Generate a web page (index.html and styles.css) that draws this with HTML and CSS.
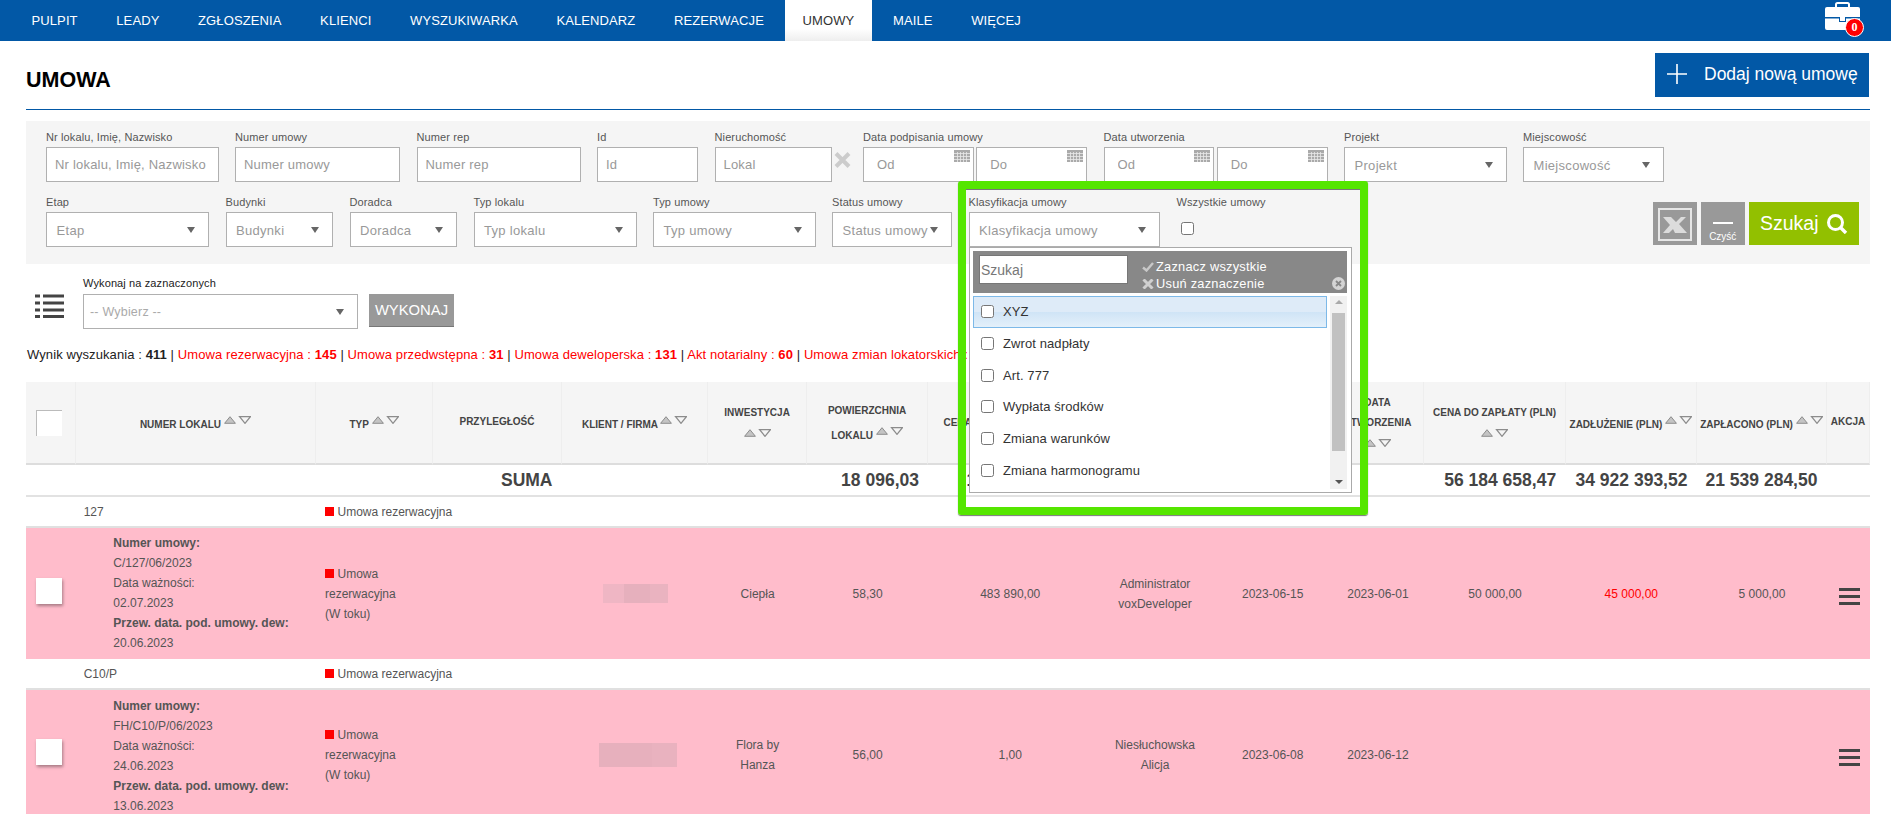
FILE: index.html
```html
<!DOCTYPE html>
<html lang="pl">
<head>
<meta charset="utf-8">
<title>Umowa</title>
<link rel="stylesheet" href="styles.css">
</head>
<body>
<svg class="defs" aria-hidden="true">
  <symbol id="sort" viewBox="0 0 27 8">
    <polygon points="6,.7 11.4,7.3 .6,7.3" fill="#c4c4c4" stroke="#8c8c8c"/>
    <polygon points="15.6,.7 26.4,.7 21,7.3" fill="#f5f5f5" stroke="#8c8c8c" stroke-width="1.3"/>
  </symbol>
  <symbol id="cal" viewBox="0 0 16 12">
    <rect width="16" height="12" fill="#aaa"/>
    <path d="M0 3.5h16M0 6.5h16M0 9.5h16M3.5 2v10M6.5 2v10M9.5 2v10M12.5 2v10" stroke="#e8e8e8" stroke-width=".8"/>
  </symbol>
</svg>

<nav class="topbar">
  <a class="nav-item">PULPIT</a>
  <a class="nav-item">LEADY</a>
  <a class="nav-item">ZGŁOSZENIA</a>
  <a class="nav-item">KLIENCI</a>
  <a class="nav-item">WYSZUKIWARKA</a>
  <a class="nav-item">KALENDARZ</a>
  <a class="nav-item">REZERWACJE</a>
  <a class="nav-item nav-active">UMOWY</a>
  <a class="nav-item">MAILE</a>
  <a class="nav-item">WIĘCEJ</a>
  <div class="tasks">
    <svg class="brief" viewBox="0 0 35 28" width="35" height="28">
      <path d="M11 5V2.5A1.5 1.5 0 0 1 12.5 1h10A1.5 1.5 0 0 1 24 2.5V5" fill="none" stroke="#fff" stroke-width="2"/>
      <path d="M2 5h31a2 2 0 0 1 2 2v8H0V7a2 2 0 0 1 2-2z" fill="#fff"/>
      <path d="M0 16.500h14V20h7v-3.500h14V26a2 2 0 0 1-2 2H2a2 2 0 0 1-2-2z" fill="#fff"/>
      <rect x="15" y="15" width="5" height="4" fill="#fff"/>
    </svg>
    <span class="badge">0</span>
  </div>
</nav>

<main class="content">
  <header class="page-head">
    <h1 class="page-title">UMOWA</h1>
    <a class="add-btn">
      <svg class="add-plus" viewBox="0 0 20 20" width="20" height="20"><path d="M10 0v20M0 10h20" stroke="#fff" stroke-width="1.600"/></svg>
      <span>Dodaj nową umowę</span>
    </a>
  </header>

  <section class="filters">
    <div class="filter-row">
      <div class="field w172"><label class="lbl">Nr lokalu, Imię, Nazwisko</label><input class="inp" placeholder="Nr lokalu, Imię, Nazwisko"></div>
      <div class="field w165"><label class="lbl">Numer umowy</label><input class="inp" placeholder="Numer umowy"></div>
      <div class="field w164"><label class="lbl">Numer rep</label><input class="inp" placeholder="Numer rep"></div>
      <div class="field w101"><label class="lbl">Id</label><input class="inp" placeholder="Id"></div>
      <div class="field field-lokal"><label class="lbl">Nieruchomość</label>
        <div class="lokal-row">
          <input class="inp inp-lokal" placeholder="Lokal">
          <svg class="clear-x" viewBox="0 0 17 16" width="17" height="16"><path d="M2 1.500l13 13M15 1.500l-13 13" stroke="#ccc" stroke-width="4"/></svg>
        </div>
      </div>
      <div class="field w224"><label class="lbl">Data podpisania umowy</label>
        <div class="date-pair">
          <div class="date"><input class="inp inp-date" placeholder="Od"><svg class="cal"><use href="#cal"/></svg></div>
          <div class="date"><input class="inp inp-date" placeholder="Do"><svg class="cal"><use href="#cal"/></svg></div>
        </div>
      </div>
      <div class="field w224"><label class="lbl">Data utworzenia</label>
        <div class="date-pair">
          <div class="date"><input class="inp inp-date" placeholder="Od"><svg class="cal"><use href="#cal"/></svg></div>
          <div class="date"><input class="inp inp-date" placeholder="Do"><svg class="cal"><use href="#cal"/></svg></div>
        </div>
      </div>
      <div class="field w162"><label class="lbl">Projekt</label><div class="sel"><span class="sel-text">Projekt</span><i class="caret"></i></div></div>
      <div class="field w141"><label class="lbl">Miejscowość</label><div class="sel"><span class="sel-text">Miejscowość</span><i class="caret"></i></div></div>
    </div>
    <div class="filter-row row-two">
      <div class="field w163"><label class="lbl">Etap</label><div class="sel"><span class="sel-text">Etap</span><i class="caret"></i></div></div>
      <div class="field w107"><label class="lbl">Budynki</label><div class="sel"><span class="sel-text">Budynki</span><i class="caret"></i></div></div>
      <div class="field w107"><label class="lbl">Doradca</label><div class="sel"><span class="sel-text">Doradca</span><i class="caret"></i></div></div>
      <div class="field w163"><label class="lbl">Typ lokalu</label><div class="sel"><span class="sel-text">Typ lokalu</span><i class="caret"></i></div></div>
      <div class="field w162"><label class="lbl">Typ umowy</label><div class="sel"><span class="sel-text">Typ umowy</span><i class="caret"></i></div></div>
      <div class="field w120"><label class="lbl">Status umowy</label><div class="sel"><span class="sel-text">Status umowy</span><i class="caret"></i></div></div>
      <div class="field w192"><label class="lbl">Klasyfikacja umowy</label><div class="sel"><span class="sel-text">Klasyfikacja umowy</span><i class="caret"></i></div></div>
      <div class="field w100"><label class="lbl">Wszystkie umowy</label><input class="all-check" type="checkbox"></div>
      <div class="filter-btns">
        <a class="btn-gray btn-xls">
          <svg viewBox="0 0 34 33" width="34" height="33">
            <rect x="1" y="1" width="32" height="31" fill="none" stroke="#e6e6e6" stroke-width="2"/>
            <polygon points="5,9 13,9 18,14 23,9 28,9 21,16 29,25 17,25 15,21 11,25 5,25 12,17" fill="#dcdcdc"/>
          </svg>
        </a>
        <a class="btn-gray btn-clear"><i class="dash"></i><span>Czyść</span></a>
        <a class="btn-search"><span>Szukaj</span>
          <svg viewBox="0 0 22 20" width="22" height="20"><circle cx="9.500" cy="8.500" r="7" fill="none" stroke="#fff" stroke-width="3"/><path d="M14.500 13.500L20 19" stroke="#fff" stroke-width="3.400"/></svg>
        </a>
      </div>
    </div>
  </section>

  <section class="bulk">
    <svg class="bulk-icon" viewBox="0 0 29 24" width="29" height="24"><path d="M0 2h5M8 2h21M0 9h5M8 9h21M0 16h5M8 16h21M0 22.500h5M8 22.500h21" stroke="#444" stroke-width="2.800"/></svg>
    <div class="bulk-field">
      <label class="lbl lbl-dark">Wykonaj na zaznaczonych</label>
      <div class="sel sel-bulk"><span class="sel-text">-- Wybierz --</span><i class="caret"></i></div>
    </div>
    <a class="bulk-btn">WYKONAJ</a>
  </section>

  <p class="results">Wynik wyszukania : <b>411</b> | <span class="red">Umowa rezerwacyjna : <b>145</b></span> | <span class="red">Umowa przedwstępna : <b>31</b></span> | <span class="red">Umowa deweloperska : <b>131</b></span> | <span class="red">Akt notarialny : <b>60</b></span> | <span class="red">Umowa zmian lokatorskich :</span></p>

  <table class="grid">
    <colgroup>
      <col class="c1"><col class="c2"><col class="c3"><col class="c4"><col class="c5"><col class="c6"><col class="c7"><col class="c8"><col class="c9"><col class="c10"><col class="c11"><col class="c12"><col class="c13"><col class="c14"><col class="c15">
    </colgroup>
    <thead>
      <tr class="head-row">
        <th><i class="head-check"></i></th>
        <th class="th-sort">NUMER LOKALU <svg class="sort"><use href="#sort"/></svg></th>
        <th class="th-sort">TYP <svg class="sort"><use href="#sort"/></svg></th>
        <th class="th-plain">PRZYLEGŁOŚĆ</th>
        <th class="th-sort">KLIENT / FIRMA <svg class="sort"><use href="#sort"/></svg></th>
        <th>INWESTYCJA<br><svg class="sort sort-own"><use href="#sort"/></svg></th>
        <th class="th-tall">POWIERZCHNIA<br>LOKALU <svg class="sort"><use href="#sort"/></svg></th>
        <th class="th-left">CENA LOKALU (PLN)</th>
        <th>OPIEKUN</th>
        <th>DATA PODPISANIA</th>
        <th>DATA<br>UTWORZENIA<br><svg class="sort sort-own"><use href="#sort"/></svg></th>
        <th>CENA DO ZAPŁATY (PLN)<br><svg class="sort sort-own"><use href="#sort"/></svg></th>
        <th class="th-sort">ZADŁUŻENIE (PLN) <svg class="sort"><use href="#sort"/></svg></th>
        <th class="th-sort">ZAPŁACONO (PLN) <svg class="sort"><use href="#sort"/></svg></th>
        <th class="th-plain">AKCJA</th>
      </tr>
    </thead>
    <tbody>
      <tr class="sum-row">
        <td></td><td></td><td></td>
        <td class="num">SUMA</td>
        <td></td><td></td>
        <td class="num">18 096,03</td>
        <td class="sum-sliver">1</td>
        <td></td><td></td><td></td>
        <td class="num">56 184 658,47</td>
        <td class="num">34 922 393,52</td>
        <td class="num">21 539 284,50</td>
        <td></td>
      </tr>
      <tr class="group-row">
        <td></td>
        <td class="group-no">127</td>
        <td colspan="3" class="type"><i class="sq"></i>Umowa rezerwacyjna</td>
        <td colspan="10"></td>
      </tr>
      <tr class="deal deal-a">
        <td><i class="row-check"></i></td>
        <td class="deal-info"><b>Numer umowy:</b><br>C/127/06/2023<br>Data ważności:<br>02.07.2023<br><b>Przew. data. pod. umowy. dew:</b><br>20.06.2023</td>
        <td class="type"><i class="sq"></i>Umowa<br>rezerwacyjna<br>(W toku)</td>
        <td></td>
        <td class="center"><i class="blur blur-a"></i></td>
        <td class="center">Ciepła</td>
        <td class="center">58,30</td>
        <td class="center shift">483 890,00</td>
        <td class="center">Administrator<br>voxDeveloper</td>
        <td class="center shift-date">2023-06-15</td>
        <td class="center">2023-06-01</td>
        <td class="center">50 000,00</td>
        <td class="center red">45 000,00</td>
        <td class="center">5 000,00</td>
        <td><i class="burger"></i></td>
      </tr>
      <tr class="group-row">
        <td></td>
        <td class="group-no">C10/P</td>
        <td colspan="3" class="type"><i class="sq"></i>Umowa rezerwacyjna</td>
        <td colspan="10"></td>
      </tr>
      <tr class="deal deal-b">
        <td><i class="row-check"></i></td>
        <td class="deal-info"><b>Numer umowy:</b><br>FH/C10/P/06/2023<br>Data ważności:<br>24.06.2023<br><b>Przew. data. pod. umowy. dew:</b><br>13.06.2023</td>
        <td class="type"><i class="sq"></i>Umowa<br>rezerwacyjna<br>(W toku)</td>
        <td></td>
        <td class="center"><i class="blur blur-b"></i></td>
        <td class="center">Flora by<br>Hanza</td>
        <td class="center">56,00</td>
        <td class="center shift">1,00</td>
        <td class="center">Niesłuchowska<br>Alicja</td>
        <td class="center shift-date">2023-06-08</td>
        <td class="center">2023-06-12</td>
        <td></td><td></td><td></td>
        <td><i class="burger"></i></td>
      </tr>
    </tbody>
  </table>
</main>

<div class="dropdown">
  <div class="dd-head">
    <input class="dd-search" placeholder="Szukaj">
    <div class="dd-links">
      <div class="dd-link">
        <svg viewBox="0 0 12 10" width="12" height="10"><path d="M1 5.500l3.500 3L11 1" fill="none" stroke="#c8c8c8" stroke-width="2.400"/></svg>
        <span>Zaznacz wszystkie</span>
      </div>
      <div class="dd-link">
        <svg viewBox="0 0 12 10" width="12" height="10"><path d="M1.500 .5l9 9M10.500 .5l-9 9" stroke="#d0d0d0" stroke-width="3"/></svg>
        <span>Usuń zaznaczenie</span>
      </div>
    </div>
    <svg class="dd-close" viewBox="0 0 13 13" width="13" height="13"><circle cx="6.500" cy="6.500" r="6.500" fill="#d4d4d4"/><path d="M4 4l5 5M9 4l-5 5" stroke="#888" stroke-width="1.800"/></svg>
  </div>
  <div class="dd-body">
    <ul class="dd-list">
      <li class="dd-item dd-hot"><input type="checkbox"><span>XYZ</span></li>
      <li class="dd-item"><input type="checkbox"><span>Zwrot nadpłaty</span></li>
      <li class="dd-item"><input type="checkbox"><span>Art. 777</span></li>
      <li class="dd-item"><input type="checkbox"><span>Wypłata środków</span></li>
      <li class="dd-item"><input type="checkbox"><span>Zmiana warunków</span></li>
      <li class="dd-item"><input type="checkbox"><span>Zmiana harmonogramu</span></li>
    </ul>
    <div class="dd-scroll">
      <i class="arrow-up"></i>
      <i class="thumb"></i>
      <i class="arrow-down"></i>
    </div>
  </div>
</div>
<div class="highlight"></div>
</body>
</html>
```

FILE: styles.css
```css
* { box-sizing: border-box; }
html { overflow: hidden; height: 814px; }
body {
  margin: 0;
  height: 814px;
  overflow: hidden;
  position: relative;
  background: #fff;
  font-family: "Liberation Sans", Arial, sans-serif;
  font-size: 12px;
  color: #555;
}
.defs { position: absolute; width: 0; height: 0; }

/* top bar */
.topbar {
  display: flex;
  height: 41px;
  padding-left: 14px;
  gap: 3.6px;
  background: #0258a6;
}
.nav-item {
  padding: 0 17.5px;
  line-height: 41px;
  font-size: 13px;
  letter-spacing: .11px;
  color: #fff;
}
.nav-active {
  color: #333;
  background: linear-gradient(#fff 70%, #eee);
}
.tasks {
  position: relative;
  width: 35px;
  height: 28px;
  margin: 2px 31px 0 auto;
}
.brief { display: block; }
.badge {
  position: absolute;
  left: 20px;
  top: 16px;
  width: 19px;
  height: 19px;
  border: 1.5px solid #fff;
  border-radius: 50%;
  background: #f00;
  color: #fff;
  font: bold 12px/16px "Liberation Serif", serif;
  text-align: center;
}

/* content */
.content { margin: 0 21px 0 26px; }
.page-head {
  display: flex;
  justify-content: space-between;
  align-items: center;
  height: 69px;
  padding: 12px 1px 12px 0;
  border-bottom: 1px solid #0258a6;
}
.page-title {
  margin: 9px 0 0;
  font-size: 21.5px;
  line-height: 24px;
  color: #000;
}
.add-btn {
  display: flex;
  align-items: center;
  width: 214.5px;
  height: 44px;
  padding: 0 0 2px 12.5px;
  gap: 17px;
  background: #0258a6;
  color: #fff;
  font-size: 17.5px;
}

/* filters */
.filters {
  height: 143px;
  margin-top: 11px;
  padding: 10px 11px 0 20px;
  background: #f5f5f5;
}
.filter-row { display: flex; gap: 16.5px; }
.row-two { margin-top: 14px; }
.field { flex: none; }
.w100 { width: 100px; }
.w101 { width: 101px; }
.w107 { width: 107.5px; }
.w120 { width: 120px; }
.w141 { width: 141px; }
.w162 { width: 162.5px; }
.w163 { width: 163px; }
.w164 { width: 164px; }
.w165 { width: 165px; }
.w172 { width: 172.5px; }
.w192 { width: 191.5px; }
.w224 { width: 224px; }
.field-lokal { width: 136.5px; margin-right: -4.5px; }
.lbl {
  display: block;
  height: 12px;
  margin-bottom: 4px;
  font-size: 11px;
  line-height: 12px;
  letter-spacing: .12px;
  color: #555;
  white-space: nowrap;
}
.lbl-dark { color: #222; margin-bottom: 5px; }
.inp {
  display: block;
  width: 100%;
  height: 35px;
  padding: 0 8px;
  border: 1px solid #b0b0b0;
  border-radius: 0;
  outline: 0;
  background: #fff;
  font: 13px "Liberation Sans", Arial, sans-serif;
  letter-spacing: .2px;
}
.inp::placeholder { color: #999; opacity: 1; }
.dd-search::placeholder { color: #777; opacity: 1; }
.lokal-row { display: flex; align-items: flex-start; }
.inp-lokal { flex: none; width: 117.5px; }
.clear-x { flex: none; margin: 5px 0 0 2px; }
.date-pair { display: flex; gap: 2.500px; }
.date { position: relative; flex: 1 1 0; }
.inp-date { padding-left: 13px; }
.cal { position: absolute; top: 3px; right: 4px; width: 16px; height: 12px; }
.sel {
  position: relative;
  display: flex;
  align-items: center;
  height: 35px;
  padding: 1px 28px 0 9.5px;
  border: 1px solid #b0b0b0;
  background: #fff;
  overflow: hidden;
}
.sel-text {
  font-size: 13px;
  letter-spacing: .3px;
  color: #999;
  white-space: nowrap;
}
.caret {
  position: absolute;
  right: 13px;
  top: 14px;
  border: 4.5px solid transparent;
  border-top: 6px solid #666;
  border-bottom: 0;
}
.all-check { display: block; margin: 14px 0 0 4px; width: 13px; height: 13px; }
.filter-btns {
  display: flex;
  gap: 4.5px;
  height: 43px;
  margin: 6px 0 0 auto;
}
.btn-gray {
  display: flex;
  flex-direction: column;
  align-items: center;
  justify-content: center;
  width: 43.500px;
  background: #999;
  color: #fff;
}
.btn-xls svg { display: block; margin-top: 1px; }
.btn-clear { justify-content: flex-start; font-size: 10px; line-height: 12px; }
.dash { width: 20px; height: 2px; margin: 20px 0 7px; background: #fff; }
.btn-search {
  display: flex;
  align-items: center;
  width: 110px;
  padding-left: 11px;
  gap: 7px;
  background: #92c000;
  color: #fff;
  font-size: 19.500px;
}

/* bulk action */
.bulk { display: flex; margin-top: 13px; }
.bulk-icon { flex: none; margin: 17px 19px 0 9px; }
.bulk-field { flex: none; width: 275px; }
.sel-bulk { padding-left: 6px; }
.sel-bulk .sel-text { font-size: 12.500px; color: #aaa; letter-spacing: .2px; }
.bulk-btn {
  align-self: flex-end;
  flex: none;
  width: 85px;
  height: 33px;
  margin: 0 0 2px 11px;
  background: #999;
  border-bottom: 1px solid #777;
  color: #fff;
  font-size: 14.800px;
  line-height: 33px;
  text-align: center;
}

.results {
  margin: 18px 0 19px 1px;
  font-size: 13px;
  letter-spacing: .09px;
  line-height: 16px;
  color: #222;
  white-space: nowrap;
}
.results b { color: inherit; font-weight: bold; }
.red { color: #f00; }

/* table */
.grid {
  width: 1844px;
  table-layout: fixed;
  border-collapse: separate;
  border-spacing: 0;
}
.c1 { width: 49.7px; }
.c2 { width: 240.3px; }
.c3 { width: 117px; }
.c4 { width: 129px; }
.c5 { width: 146.5px; }
.c6 { width: 98.2px; }
.c7 { width: 121.8px; }
.c8 { width: 171.5px; }
.c9 { width: 110px; }
.c10 { width: 121.5px; }
.c11 { width: 93px; }
.c12 { width: 141.2px; }
.c13 { width: 131.3px; }
.c14 { width: 130px; }
.c15 { width: 43px; }
.head-row { height: 83px; }
.head-row th {
  padding: 0 3px;
  background: #f5f5f5;
  border-right: 1px solid #eee;
  border-bottom: 2px solid #ddd;
  font-size: 10px;
  line-height: 20px;
  color: #444;
  text-align: center;
  vertical-align: middle;
}
.head-row .th-plain { padding-bottom: 2px; }
.head-row .th-sort { padding-top: 4px; }
.head-row .th-tall { line-height: 25px; }
.head-row .th-left { text-align: left; padding-left: 15px; white-space: nowrap; overflow: hidden; }
.sort { width: 27px; height: 8px; vertical-align: 4px; }
.sort-own { vertical-align: -1px; }
.head-check {
  display: block;
  width: 26px;
  height: 26px;
  margin: 0 0 0 7px;
  background: #fff;
  border-top: 1px solid #bbb;
  border-left: 1px solid #bbb;
}
.sum-row { height: 32px; }
.sum-row td {
  border-bottom: 2px solid #e2e2e2;
  font-size: 17.500px;
  font-weight: bold;
  color: #444;
}
.num { text-align: right; padding-right: 9.5px; white-space: nowrap; }
.sum-row .sum-sliver { padding-left: 38px; color: #2a3a4a; }
.group-row { height: 31px; }
.group-row td { border-bottom: 2px solid #e0e0e0; }
.group-no { padding-left: 8px; }
.type { padding-left: 9px; line-height: 20px; }
.sq {
  display: inline-block;
  width: 9px;
  height: 9px;
  margin-right: 3.500px;
  background: #f00;
}
.deal { background: #ffbccb; line-height: 20px; }
.deal-a { height: 131px; }
.deal-b { height: 130px; }
.deal-info { padding-left: 37.6px; white-space: nowrap; }
.deal-a .deal-info { padding-bottom: 2px; }
.deal-b .deal-info { padding-top: 2px; }
.center { text-align: center; }
.shift { padding-right: 9px; }
.shift-date { padding-left: 5px; }
.row-check {
  display: block;
  width: 26px;
  height: 26px;
  margin: 0 0 6px 9px;
  background: #fff;
  box-shadow: 1px 2px 3px rgba(0,0,0,.35);
}
.blur { display: block; margin: 0 auto; }
.blur-a {
  width: 65px;
  height: 19px;
  background: linear-gradient(90deg, #efb6c4 0 33%, #e6b0bd 33% 73%, #eab3c0 73%);
}
.blur-b {
  width: 78px;
  height: 24px;
  margin-left: 36px;
  background: linear-gradient(90deg, #e7b0bd 0 68%, #e9b2bf 68%);
}
.burger {
  display: block;
  width: 21px;
  height: 17px;
  margin: 5px 0 0 11px;
  border-top: 3px solid #444;
  border-bottom: 3px solid #444;
  position: relative;
}
.burger::before {
  content: "";
  position: absolute;
  left: 0;
  right: 0;
  top: 4px;
  height: 3px;
  background: #444;
}

/* dropdown opened over the table */
.dropdown {
  position: absolute;
  left: 969px;
  top: 247px;
  width: 383px;
  height: 246px;
  padding: 3px 4px 3px 3px;
  background: #fff;
  border: 1px solid #aaa;
}
.dd-head {
  position: relative;
  display: flex;
  height: 42px;
  padding: 4px 0 0 6px;
  background: #888;
}
.dd-search {
  flex: none;
  width: 149px;
  height: 29px;
  padding: 0 1px;
  border: 1px solid #777;
  border-radius: 0;
  outline: 0;
  background: #fff;
  font: 14px "Liberation Sans", Arial, sans-serif;
}
.dd-links { margin: 3px 0 0 14px; }
.dd-link {
  display: flex;
  align-items: center;
  gap: 2px;
  height: 17px;
  font-size: 12.800px;
  letter-spacing: .25px;
  color: #fff;
}
.dd-close { position: absolute; right: 2px; top: 26px; }
.dd-body { display: flex; margin-top: 3px; height: 193px; }
.dd-list { flex: none; width: 354px; margin: 0; padding: 0; list-style: none; }
.dd-item {
  display: flex;
  align-items: center;
  height: 31.700px;
  padding-left: 7px;
  border: 1px solid transparent;
  font-size: 13px;
  letter-spacing: .1px;
  color: #333;
}
.dd-item input { flex: none; width: 13px; height: 13px; margin: 0 9px 0 0; }
.dd-hot {
  border-color: #7db9e8;
  background: linear-gradient(#deebf8 50%, #cfe4f6 50%, #e4f0fa);
}
.dd-scroll {
  position: relative;
  flex: none;
  width: 17px;
  margin-left: 3px;
  background: #f1f1f1;
}
.thumb { position: absolute; left: 2px; right: 2px; top: 17px; height: 138px; background: #c1c1c1; }
.arrow-up, .arrow-down { position: absolute; left: 4.500px; border: 4px solid transparent; }
.arrow-up { top: 4px; border-bottom: 4px solid #aaa; border-top: 0; }
.arrow-down { bottom: 5px; border-top: 4px solid #555; border-bottom: 0; }

/* annotation frame */
.highlight {
  position: absolute;
  left: 958px;
  top: 181px;
  width: 410px;
  height: 334px;
  border: 8px solid #55e600;
  border-radius: 3px;
  box-shadow: inset 0 1px 0 #777, 0 1px 1px #777;
  pointer-events: none;
}
```
